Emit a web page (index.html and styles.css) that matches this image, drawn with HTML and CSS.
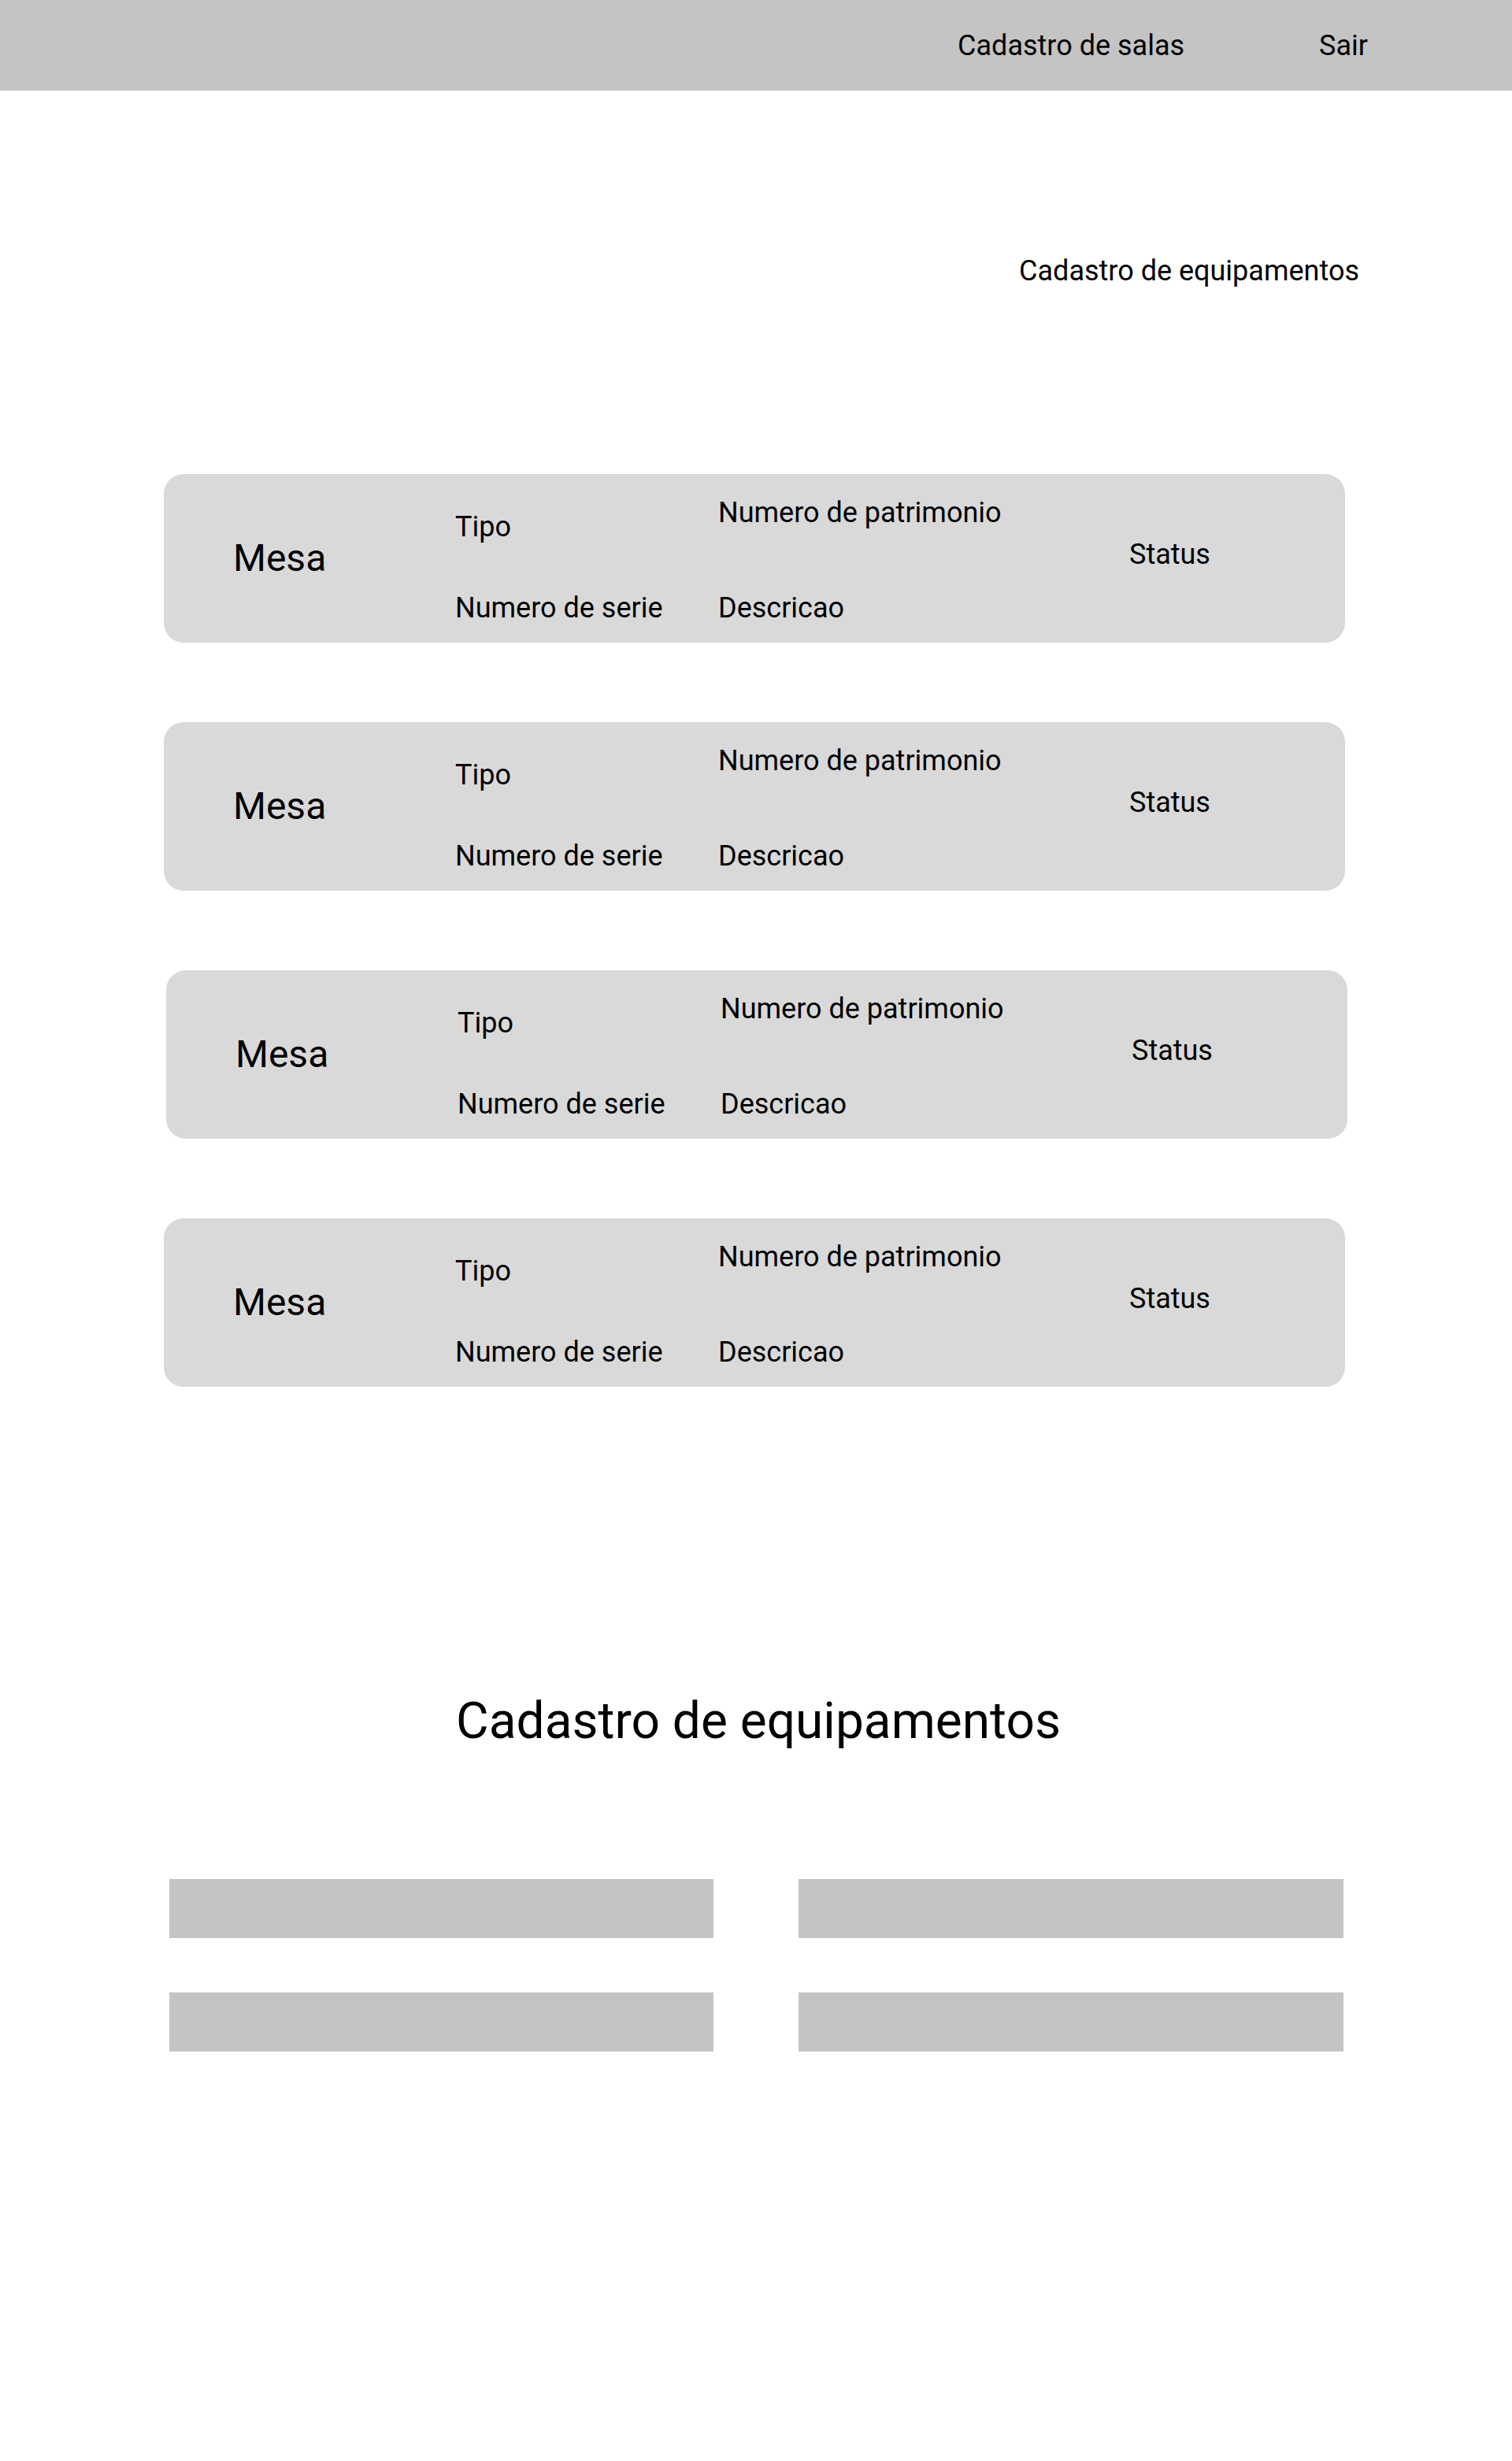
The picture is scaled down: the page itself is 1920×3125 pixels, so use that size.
FILE: index.html
```html
<!DOCTYPE html>
<html lang="pt-BR">
<head>
<meta charset="utf-8">
<title>Cadastro de equipamentos</title>
<link rel="stylesheet" href="styles.css">
</head>
<body>
<header class="topbar">
  <nav class="nav">
    <a class="nav-link" href="#">Cadastro de salas</a>
    <a class="nav-link" href="#">Sair</a>
  </nav>
</header>

<main class="page">
  <div class="sub-title-row">
    <a class="sub-title" href="#">Cadastro de equipamentos</a>
  </div>

  <section class="card-list">
    <article class="card">
      <div class="col col-name"><span class="name">Mesa</span></div>
      <div class="col col-type"><span>Tipo</span><span>Numero de serie</span></div>
      <div class="col col-patr"><span>Numero de patrimonio</span><span>Descricao</span></div>
      <div class="col col-status"><span>Status</span></div>
    </article>
    <article class="card">
      <div class="col col-name"><span class="name">Mesa</span></div>
      <div class="col col-type"><span>Tipo</span><span>Numero de serie</span></div>
      <div class="col col-patr"><span>Numero de patrimonio</span><span>Descricao</span></div>
      <div class="col col-status"><span>Status</span></div>
    </article>
    <article class="card card-shift">
      <div class="col col-name"><span class="name">Mesa</span></div>
      <div class="col col-type"><span>Tipo</span><span>Numero de serie</span></div>
      <div class="col col-patr"><span>Numero de patrimonio</span><span>Descricao</span></div>
      <div class="col col-status"><span>Status</span></div>
    </article>
    <article class="card">
      <div class="col col-name"><span class="name">Mesa</span></div>
      <div class="col col-type"><span>Tipo</span><span>Numero de serie</span></div>
      <div class="col col-patr"><span>Numero de patrimonio</span><span>Descricao</span></div>
      <div class="col col-status"><span>Status</span></div>
    </article>
  </section>

  <section class="form-section">
    <h1 class="form-title">Cadastro de equipamentos</h1>
    <form class="form-grid">
      <input class="field" type="text" aria-label="Campo 1">
      <input class="field" type="text" aria-label="Campo 2">
      <input class="field" type="text" aria-label="Campo 3">
      <input class="field" type="text" aria-label="Campo 4">
    </form>
  </section>
</main>
</body>
</html>
```

FILE: styles.css
```css
* {
  box-sizing: border-box;
}

html, body {
  margin: 0;
  padding: 0;
  background: #ffffff;
}

body {
  font-family: Roboto, "Liberation Sans", Arial, sans-serif;
  color: #000000;
  font-size: 36px;
  line-height: 1;
}

a {
  color: inherit;
  text-decoration: none;
}

/* Top bar */
.topbar {
  height: 115px;
  background: #c4c4c4;
  display: flex;
  align-items: center;
  justify-content: flex-end;
  padding-right: 183px;
}

.nav {
  display: flex;
  gap: 171px;
  align-items: center;
}

.nav-link {
  font-size: 36px;
  line-height: 1;
}

/* Subtitle */
.sub-title-row {
  display: flex;
  justify-content: flex-end;
  padding-right: 194px;
  margin-top: 211px;
}

.sub-title {
  font-size: 36px;
  line-height: 1;
}

/* Cards */
.card-list {
  display: flex;
  flex-direction: column;
  gap: 101px;
  padding-left: 208px;
  margin-top: 240px;
}

.card {
  width: 1500px;
  height: 214px;
  background: #d9d9d9;
  border-radius: 25px;
  display: grid;
  grid-template-columns: 282px 334px 522px 1fr;
  padding-left: 88px;
}

.card-shift {
  margin-left: 3px;
}

.col {
  display: flex;
  flex-direction: column;
  align-items: flex-start;
  white-space: nowrap;
}

.col span {
  font-size: 36px;
  line-height: 36px;
}

.col .name {
  font-size: 48px;
  line-height: 48px;
}

.col-name {
  padding-top: 83px;
}

.col-type {
  padding-top: 49px;
  gap: 67px;
}

.col-patr {
  padding-top: 31px;
  gap: 85px;
}

.col-status {
  padding-top: 84px;
}

/* Form */
.form-section {
  margin-top: 393px;
}

.form-title {
  margin: 0;
  font-size: 64px;
  line-height: 64px;
  font-weight: 400;
  text-align: center;
  padding-left: 6px;
}

.form-grid {
  margin: 168px 0 0 0;
  padding-left: 215px;
  display: grid;
  grid-template-columns: 691px 692px;
  column-gap: 108px;
  row-gap: 69px;
}

.field {
  display: block;
  width: 100%;
  height: 75px;
  border: none;
  margin: 0;
  padding: 0 16px;
  background: #c4c4c4;
  font-family: inherit;
  font-size: 28px;
  outline: none;
}
```
